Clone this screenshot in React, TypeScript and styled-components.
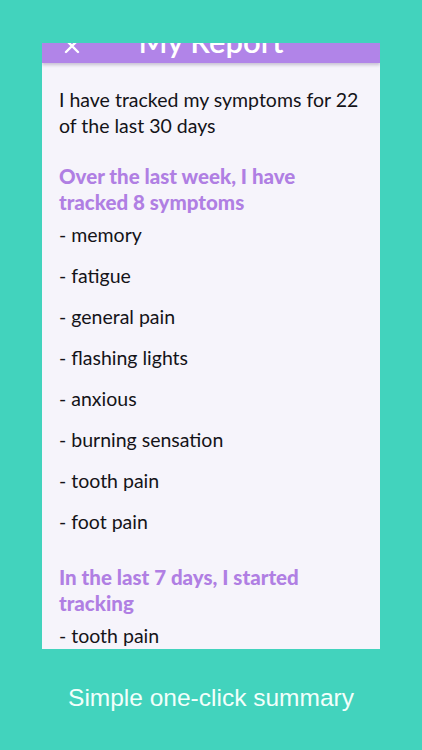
import styled, { createGlobalStyle } from 'styled-components';

const GlobalStyle = createGlobalStyle`
  html, body {
    margin: 0;
    padding: 0;
    background: #42d3bd;
  }
  body {
    font-family: Lato, "Noto Sans", sans-serif;
  }
`;

const Page = styled.div`
  width: 422px;
  height: 750px;
  background: #42d3bd;
  display: flex;
  flex-direction: column;
  align-items: center;
  padding-top: 43px;
  box-sizing: border-box;
`;

const Screen = styled.div`
  width: 338px;
  height: 606px;
  background: #f6f4fb;
  overflow: hidden;
  display: flex;
  flex-direction: column;
`;

const Header = styled.div`
  flex: none;
  height: 64px;
  margin-top: -44px;
  background: #b184e8;
  box-shadow: 0 2px 3px rgba(60, 40, 90, 0.25);
  display: flex;
  align-items: flex-end;
  position: relative;
  z-index: 1;
`;

const CloseButton = styled.div`
  width: 18px;
  height: 18px;
  margin-left: 21px;
  margin-bottom: 8px;
  color: #fff;
`;

const Title = styled.div`
  flex: 1;
  text-align: center;
  margin-right: 39px;
  margin-bottom: 2px;
  font-size: 31px;
  line-height: 40px;
  font-weight: 600;
  color: #fff;
`;

const Body = styled.div`
  padding: 24px 14px 0 17px;
  color: #141318;
`;

const Intro = styled.p`
  margin: 0 0 24px;
  font-size: 19.5px;
  line-height: 26px;
`;

const Heading = styled.h2`
  margin: 0;
  max-width: 295px;
  font-size: 20.5px;
  line-height: 26px;
  font-weight: 900;
  color: #b07fe3;
`;

const SymptomList = styled.ul<{ $tail?: boolean }>`
  list-style: none;
  margin: 7px 0 ${(p) => (p.$tail ? '0' : '29px')};
  padding: 0;
  display: flex;
  flex-direction: column;
  gap: 15px;
`;

const Symptom = styled.li`
  font-size: 19.5px;
  line-height: 26px;
`;

const Caption = styled.div`
  flex: 1;
  display: flex;
  align-items: center;
  justify-content: center;
  padding-bottom: 4px;
  font-family: "Liberation Sans", Arial, sans-serif;
  font-size: 24.5px;
  color: #f2fffb;
`;

const weekly = [
  'memory',
  'fatigue',
  'general pain',
  'flashing lights',
  'anxious',
  'burning sensation',
  'tooth pain',
  'foot pain',
];

export default function App() {
  return (
    <>
      <GlobalStyle />
      <Page>
        <Screen>
          <Header>
            <CloseButton>
              <svg width="18" height="18" viewBox="0 0 18 18" fill="none" stroke="currentColor" strokeWidth="2.4" strokeLinecap="round">
                <path d="M3 3 L15 15 M15 3 L3 15" />
              </svg>
            </CloseButton>
            <Title>My Report</Title>
          </Header>
          <Body>
            <Intro>I have tracked my symptoms for 22 of the last 30 days</Intro>
            <Heading>Over the last week, I have tracked 8 symptoms</Heading>
            <SymptomList>
              {weekly.map((s) => (
                <Symptom key={s}>- {s}</Symptom>
              ))}
            </SymptomList>
            <Heading>In the last 7 days, I started tracking</Heading>
            <SymptomList $tail>
              <Symptom>- tooth pain</Symptom>
            </SymptomList>
          </Body>
        </Screen>
        <Caption>Simple one-click summary</Caption>
      </Page>
    </>
  );
}
